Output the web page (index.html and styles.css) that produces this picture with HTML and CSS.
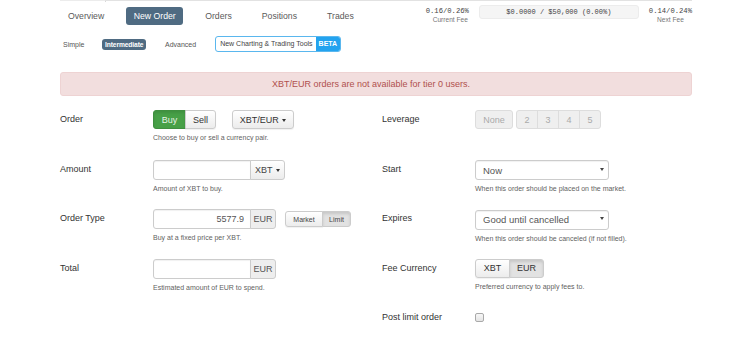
FILE: index.html
```html
<!DOCTYPE html>
<html lang="en">
<head>
    <meta charset="UTF-8">
    <meta name="viewport" content="width=device-width, initial-scale=1.0">
    <title>New Order</title>
    <link rel="stylesheet" href="styles.css">
</head>
<body>

    <div class="page">
        <!-- Borde de las pestañas superiores -->
        <div class="top-rule">
            <span class="tab-stub"></span>
            <span class="rule"></span>
        </div>

        <!-- Navegación principal y comisiones -->
        <div class="navbar">
            <ul class="nav-pills">
                <li><a href="#">Overview</a></li>
                <li><a href="#" class="active">New Order</a></li>
                <li><a href="#">Orders</a></li>
                <li><a href="#">Positions</a></li>
                <li><a href="#">Trades</a></li>
            </ul>
            <div class="fees">
                <div class="fee fee-current">
                    <span class="mono">0.16/0.26%</span>
                    <small>Current Fee</small>
                </div>
                <div class="volume mono">$0.0000 / $50,000 (0.00%)</div>
                <div class="fee fee-next">
                    <span class="mono">0.14/0.24%</span>
                    <small>Next Fee</small>
                </div>
            </div>
        </div>

        <!-- Modo del formulario -->
        <div class="subnav">
            <a href="#">Simple</a>
            <a href="#" class="active">Intermediate</a>
            <a href="#" class="advanced">Advanced</a>
            <a href="#" class="promo">
                <span class="promo-text">New Charting &amp; Trading Tools</span>
                <span class="promo-badge">BETA</span>
            </a>
        </div>

        <div class="alert">XBT/EUR orders are not available for tier 0 users.</div>

        <!-- Formulario de orden -->
        <form class="order-form">
            <div class="col">
                <div class="form-group">
                    <label>Order</label>
                    <div class="field">
                        <div class="controls">
                            <div class="btn-group">
                                <button type="button" class="btn btn-buy">Buy</button>
                                <button type="button" class="btn btn-sell">Sell</button>
                            </div>
                            <button type="button" class="btn btn-pair">XBT/EUR <span class="caret"></span></button>
                        </div>
                        <div class="help">Choose to buy or sell a currency pair.</div>
                    </div>
                </div>

                <div class="form-group">
                    <label>Amount</label>
                    <div class="field">
                        <div class="input-group">
                            <input type="text" class="input">
                            <button type="button" class="addon addon-btn">XBT <span class="caret"></span></button>
                        </div>
                        <div class="help">Amount of XBT to buy.</div>
                    </div>
                </div>

                <div class="form-group">
                    <label>Order Type</label>
                    <div class="field">
                        <div class="controls">
                            <div class="input-group">
                                <input type="text" class="input input-right" value="5577.9">
                                <span class="addon">EUR</span>
                            </div>
                            <div class="btn-group btn-group-sm">
                                <button type="button" class="btn btn-market">Market</button>
                                <button type="button" class="btn btn-limit active">Limit</button>
                            </div>
                        </div>
                        <div class="help">Buy at a fixed price per XBT.</div>
                    </div>
                </div>

                <div class="form-group">
                    <label>Total</label>
                    <div class="field">
                        <div class="input-group">
                            <input type="text" class="input">
                            <span class="addon">EUR</span>
                        </div>
                        <div class="help">Estimated amount of EUR to spend.</div>
                    </div>
                </div>
            </div>

            <div class="col">
                <div class="form-group">
                    <label>Leverage</label>
                    <div class="field">
                        <div class="controls">
                            <button type="button" class="btn btn-disabled btn-none">None</button>
                            <div class="btn-group lev-group">
                                <button type="button" class="btn btn-disabled btn-lev">2</button>
                                <button type="button" class="btn btn-disabled btn-lev">3</button>
                                <button type="button" class="btn btn-disabled btn-lev">4</button>
                                <button type="button" class="btn btn-disabled btn-lev">5</button>
                            </div>
                        </div>
                    </div>
                </div>

                <div class="form-group">
                    <label>Start</label>
                    <div class="field">
                        <span class="select-wrap">
                            <select class="select">
                                <option>Now</option>
                            </select>
                        </span>
                        <div class="help">When this order should be placed on the market.</div>
                    </div>
                </div>

                <div class="form-group">
                    <label>Expires</label>
                    <div class="field">
                        <span class="select-wrap">
                            <select class="select">
                                <option>Good until cancelled</option>
                            </select>
                        </span>
                        <div class="help">When this order should be canceled (if not filled).</div>
                    </div>
                </div>

                <div class="form-group">
                    <label>Fee Currency</label>
                    <div class="field">
                        <div class="btn-group">
                            <button type="button" class="btn btn-fee">XBT</button>
                            <button type="button" class="btn btn-fee active">EUR</button>
                        </div>
                        <div class="help">Preferred currency to apply fees to.</div>
                    </div>
                </div>

                <div class="form-group">
                    <label>Post limit order</label>
                    <div class="field">
                        <input type="checkbox" class="check">
                    </div>
                </div>
            </div>
        </form>
    </div>

</body>
</html>
```

FILE: styles.css
```css
/* Colores */
:root {
    --texto: #333;
    --gris: #666;
    --borde: #ccc;
    --pill: #4f6b82;
    --verde: #47a047;
    --alerta-fondo: #f2dede;
    --alerta-texto: #b0504d;
    --azul: #23a3ef;
}

/* Estilos generales */
body {
    margin: 0;
    font-family: "Liberation Sans", Arial, sans-serif;
    color: var(--texto);
    background-color: #fff;
}

.page {
    width: 632px;
    margin-left: 60px;
}

.mono {
    font-family: "Liberation Mono", "DejaVu Sans Mono", monospace;
}

a {
    text-decoration: none;
}

/* Borde superior */
.top-rule {
    display: flex;
    height: 2px;
}

.tab-stub {
    width: 45px;
    border-top: 1px solid #ececec;
    border-right: 1px solid #d8d8d8;
}

.rule {
    flex: 1;
    border-top: 1px solid #e2e2e2;
}

/* Navegación principal */
.navbar {
    display: flex;
    justify-content: space-between;
    padding-top: 5px;
}

.nav-pills {
    display: flex;
    gap: 14px;
    list-style: none;
    margin: 0;
    padding: 0;
}

.nav-pills a {
    display: block;
    padding: 0 8px;
    line-height: 18px;
    font-size: 8.7px;
    color: #5a5a5a;
    border-radius: 3px;
}

.nav-pills a.active {
    padding: 0 7.5px;
    background-color: var(--pill);
    color: #fff;
}

/* Comisiones */
.fees {
    display: flex;
    gap: 10px;
}

.fee {
    display: flex;
    flex-direction: column;
}

.fee .mono {
    font-size: 7.2px;
    line-height: 9px;
    color: #444;
}

.fee small {
    font-size: 6.6px;
    line-height: 8px;
    color: #777;
}

.fee-current {
    align-items: flex-end;
}

.fee-current small {
    padding-right: 1px;
}

.fee-next {
    align-items: center;
}

.volume {
    width: 158px;
    height: 12px;
    margin-top: -2px;
    line-height: 12px;
    font-size: 7px;
    text-align: center;
    color: #444;
    background-color: #f5f5f5;
    border: 1px solid #ececec;
    border-radius: 3px;
}

/* Modo del formulario */
.subnav {
    display: flex;
    align-items: center;
    gap: 15px;
    margin-top: 11px;
    height: 16px;
    font-size: 7px;
}

.subnav a {
    padding: 0 3px;
    line-height: 11px;
    border-radius: 3px;
    color: #555;
}

.subnav a.active {
    padding: 0 2.5px;
    background-color: var(--pill);
    color: #fff;
    font-weight: bold;
    font-size: 6.7px;
    letter-spacing: -0.1px;
}

.subnav a.advanced {
    margin-left: 1px;
}

.subnav a.promo {
    display: flex;
    padding: 0;
    margin-left: 1px;
    border: 1px solid #5ab7ee;
    border-radius: 3px;
    overflow: hidden;
}

.promo-text {
    padding: 0 3px 0 4px;
    line-height: 14px;
    color: #444;
}

.promo-badge {
    padding: 0 3px;
    line-height: 14px;
    background-color: var(--azul);
    color: #fff;
    font-weight: bold;
}

/* Alerta */
.alert {
    box-sizing: border-box;
    margin-top: 20px;
    height: 24px;
    padding-right: 10px;
    line-height: 22px;
    font-size: 9px;
    text-align: center;
    color: var(--alerta-texto);
    background-color: var(--alerta-fondo);
    border: 1px solid #eed3d3;
    border-radius: 3px;
}

/* Formulario */
.order-form {
    display: grid;
    grid-template-columns: 322px 1fr;
    margin-top: 14px;
}

.form-group {
    display: flex;
    height: 49.5px;
}

.form-group label {
    flex: 0 0 93px;
    line-height: 19px;
    font-size: 9px;
}

.controls {
    display: flex;
    align-items: center;
}

.help {
    margin-top: 4px;
    font-size: 7px;
    line-height: 9px;
    color: #5f5f5f;
}

/* Botones */
.btn {
    box-sizing: border-box;
    height: 19px;
    padding: 0;
    font-family: inherit;
    font-size: 9px;
    color: var(--texto);
    background: linear-gradient(#fff, #ececec);
    border: 1px solid var(--borde);
    border-radius: 3px;
    box-shadow: 0 1px 1px rgba(0, 0, 0, 0.06);
    cursor: pointer;
}

.btn-group {
    display: flex;
}

.btn-group .btn + .btn {
    margin-left: -1px;
}

.btn-group .btn:not(:first-child) {
    border-top-left-radius: 0;
    border-bottom-left-radius: 0;
}

.btn-group .btn:not(:last-child) {
    border-top-right-radius: 0;
    border-bottom-right-radius: 0;
}

.btn.active {
    background: #e2e2e2;
    box-shadow: inset 0 2px 3px rgba(0, 0, 0, 0.12);
}

.btn-buy {
    width: 33px;
    color: #e6f2e6;
    background: var(--verde);
    border-color: #3f8f3f;
    box-shadow: inset 0 2px 3px rgba(0, 0, 0, 0.1);
}

.btn-sell {
    width: 31px;
}

.btn-pair {
    width: 62px;
    margin-left: 16px;
}

.caret {
    display: inline-block;
    width: 0;
    height: 0;
    margin-left: 1px;
    vertical-align: middle;
    border-top: 3px solid #333;
    border-left: 2.5px solid transparent;
    border-right: 2.5px solid transparent;
}

.btn-group-sm .btn {
    height: 16px;
    font-size: 7px;
    color: #444;
}

.btn-group-sm {
    margin-left: 9px;
}

.btn-market {
    width: 38px;
}

.btn-limit {
    width: 29px;
}

.btn-disabled {
    color: #aaa;
    background: #efefef;
    border-color: #ddd;
    box-shadow: none;
    cursor: not-allowed;
}

.btn-none {
    width: 38px;
}

.lev-group {
    margin-left: 3px;
}

.btn-lev {
    width: 22px;
}

.btn-fee {
    width: 35px;
}

/* Campos de texto */
.input-group {
    display: flex;
}

.input {
    box-sizing: border-box;
    width: 98px;
    height: 20px;
    padding: 0 6px;
    font-family: inherit;
    font-size: 9px;
    color: #555;
    border: 1px solid var(--borde);
    border-radius: 3px 0 0 3px;
    box-shadow: inset 0 1px 1px rgba(0, 0, 0, 0.06);
    outline: none;
}

.input-right {
    text-align: right;
}

.addon {
    box-sizing: border-box;
    width: 26px;
    height: 20px;
    margin-left: -1px;
    line-height: 18px;
    font-size: 9px;
    text-align: center;
    color: #555;
    background-color: #eee;
    border: 1px solid var(--borde);
    border-radius: 0 3px 3px 0;
}

.addon-btn {
    width: 35px;
    padding: 0;
    font-family: inherit;
    color: #444;
    background: linear-gradient(#fff, #ececec);
}

/* Selectores */
.select-wrap {
    position: relative;
    display: block;
    width: 134px;
}

.select-wrap::after {
    content: "";
    position: absolute;
    right: 5px;
    top: 8px;
    border-top: 3px solid #444;
    border-left: 2px solid transparent;
    border-right: 2px solid transparent;
}

.select {
    appearance: none;
    box-sizing: border-box;
    width: 134px;
    height: 20px;
    padding: 0 7px;
    font-family: inherit;
    font-size: 9.5px;
    color: #555;
    background-color: #fff;
    border: 1px solid var(--borde);
    border-radius: 3px;
    box-shadow: inset 0 1px 1px rgba(0, 0, 0, 0.06);
    outline: none;
}

/* Casilla */
.check {
    appearance: none;
    box-sizing: border-box;
    width: 9px;
    height: 9px;
    margin: 5px 0 0;
    background: linear-gradient(#f7f7f7, #e4e4e4);
    border: 1px solid #a9a9a9;
    border-radius: 2px;
}
```
